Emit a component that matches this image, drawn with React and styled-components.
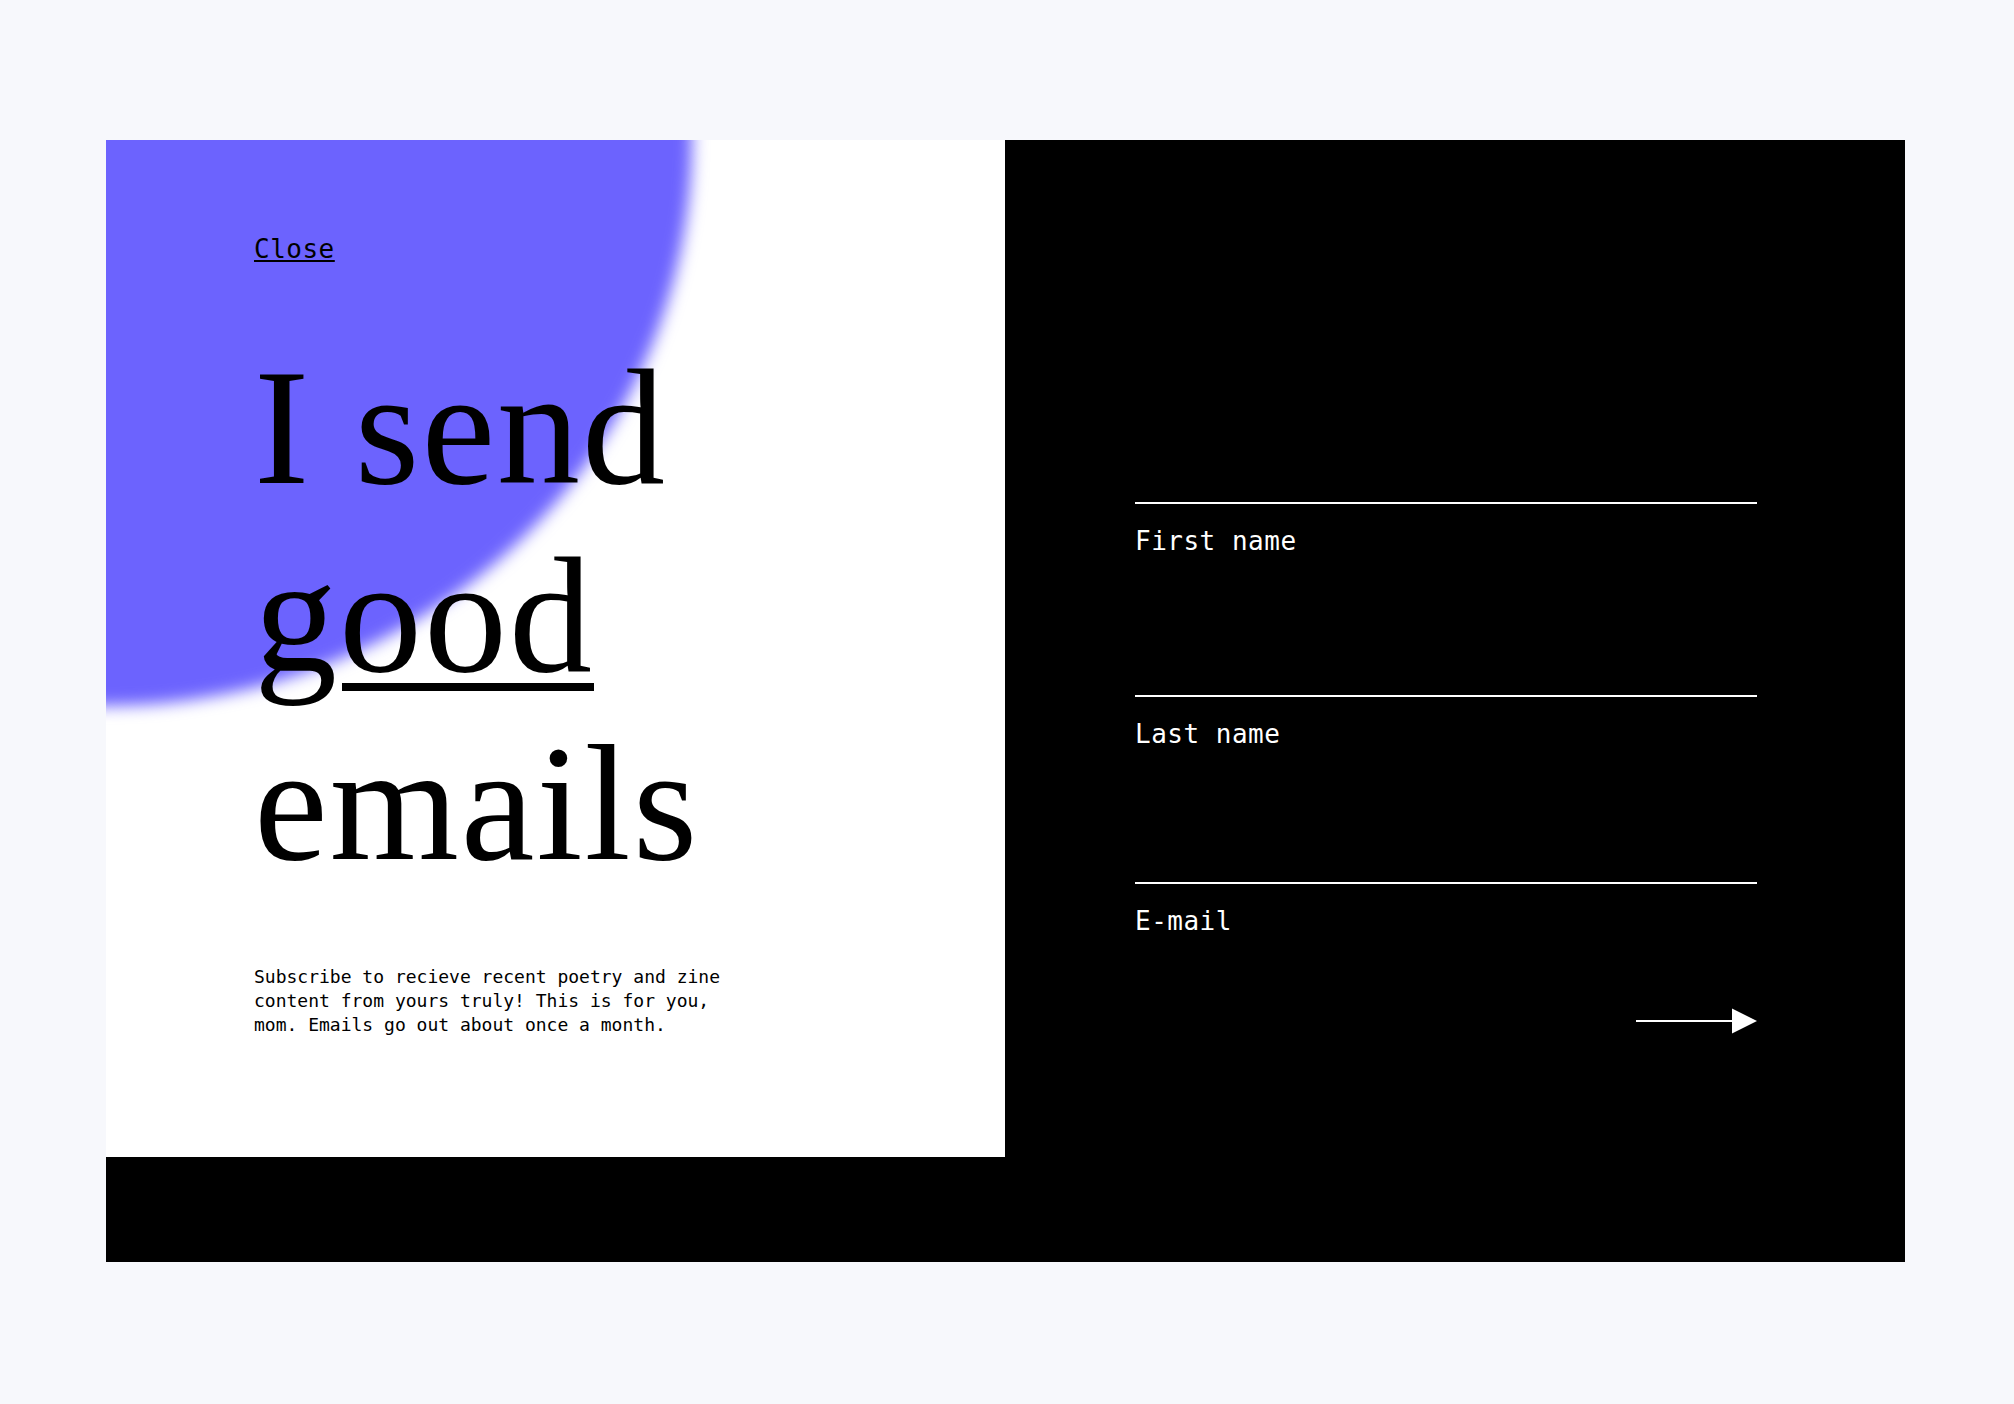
import React from "react";
import styled, { createGlobalStyle } from "styled-components";

const GlobalStyle = createGlobalStyle`
  html, body {
    margin: 0;
    padding: 0;
    background: #f7f8fc;
  }
  * { box-sizing: border-box; }
`;

const MONO = `"DejaVu Sans Mono", "Liberation Mono", monospace`;
const SERIF = `"Liberation Serif", "DejaVu Serif", serif`;

const Page = styled.main`
  display: flex;
  justify-content: flex-start;
  padding: 140px 0 0 106px;
  min-height: 100vh;
`;

const Card = styled.section`
  width: 1799px;
  height: 1122px;
  background: #000;
  display: grid;
  grid-template-columns: 899px 1fr;
  align-items: start;
`;

const IntroPanel = styled.div`
  position: relative;
  overflow: hidden;
  height: 1017px;
  background: #fff;
  padding: 94px 0 0 148px;
  display: flex;
  flex-direction: column;
  align-items: flex-start;
`;

const Glow = styled.div`
  position: absolute;
  left: -586px;
  top: -566px;
  width: 1172px;
  height: 1132px;
  border-radius: 50%;
  background: #6c63fe;
  filter: blur(8px);
  pointer-events: none;
`;

const CloseLink = styled.a`
  position: relative;
  font-family: ${MONO};
  font-size: 26px;
  line-height: 30px;
  letter-spacing: 0.5px;
  color: #000;
  text-decoration: underline;
  text-decoration-thickness: 1.5px;
  text-underline-offset: 2px;
  cursor: pointer;
`;

const Headline = styled.h1`
  position: relative;
  margin: 69px 0 0;
  max-width: 540px;
  font-family: ${SERIF};
  font-weight: 400;
  font-size: 166px;
  line-height: 188px;
  letter-spacing: 2px;
  color: #000;
`;

const Emphasis = styled.span`
  text-decoration: underline;
  text-decoration-thickness: 8px;
  text-underline-offset: 12px;
  text-decoration-skip-ink: auto;
`;

const Blurb = styled.p`
  position: relative;
  margin: 68px 0 0;
  max-width: 480px;
  font-family: ${MONO};
  font-size: 18px;
  line-height: 24px;
  color: #000;
`;

const SignupForm = styled.form`
  padding: 362px 0 0 130px;
  display: flex;
  flex-direction: column;
  width: 752px;
`;

const Field = styled.label`
  display: flex;
  flex-direction: column;
  border-top: 2px solid #fff;
  padding-top: 22px;
`;

const FieldLabel = styled.span`
  font-family: ${MONO};
  font-size: 26px;
  line-height: 30px;
  letter-spacing: 0.5px;
  color: #fff;
`;

const FieldInput = styled.input`
  height: ${(p) => p.$h}px;
  width: 100%;
  background: transparent;
  border: none;
  outline: none;
  color: #fff;
  font-family: ${MONO};
  font-size: 24px;
  padding: 0;
`;

const SubmitRow = styled.div`
  display: flex;
  justify-content: flex-end;
`;

const SubmitButton = styled.button`
  background: none;
  border: none;
  padding: 0;
  cursor: pointer;
  display: block;
  line-height: 0;
`;

const ArrowIcon = () => (
  <svg width="121" height="26" viewBox="0 0 121 26" aria-hidden="true">
    <line x1="0" y1="13" x2="98" y2="13" stroke="#fff" strokeWidth="2" />
    <polygon points="96,0.5 121,13 96,25.5" fill="#fff" />
  </svg>
);

const fields = [
  { label: "First name", name: "firstName", type: "text", h: 138.6 },
  { label: "Last name", name: "lastName", type: "text", h: 133.4 },
  { label: "E-mail", name: "email", type: "email", h: 72 },
];

export default function App() {
  return (
    <>
      <GlobalStyle />
      <Page>
        <Card>
          <IntroPanel>
            <Glow />
            <CloseLink href="#">Close</CloseLink>
            <Headline>
              I send <Emphasis>good</Emphasis> emails
            </Headline>
            <Blurb>
              Subscribe to recieve recent poetry and zine content from yours
              truly! This is for you, mom. Emails go out about once a month.
            </Blurb>
          </IntroPanel>
          <SignupForm onSubmit={(e) => e.preventDefault()}>
            {fields.map((f) => (
              <Field key={f.name}>
                <FieldLabel>{f.label}</FieldLabel>
                <FieldInput name={f.name} type={f.type} $h={f.h} />
              </Field>
            ))}
            <SubmitRow>
              <SubmitButton type="submit" aria-label="Subscribe">
                <ArrowIcon />
              </SubmitButton>
            </SubmitRow>
          </SignupForm>
        </Card>
      </Page>
    </>
  );
}
